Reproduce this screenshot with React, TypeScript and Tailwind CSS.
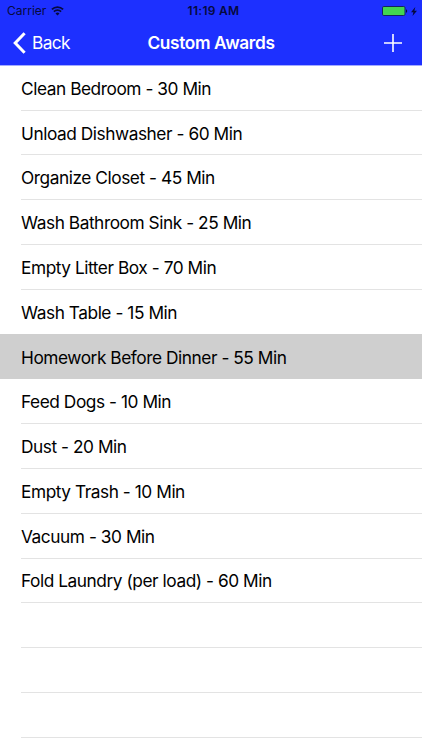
interface Award {
  id: number;
  name: string;
  minutes: number;
}

const awards: Award[] = [
  { id: 1, name: "Clean Bedroom", minutes: 30 },
  { id: 2, name: "Unload Dishwasher", minutes: 60 },
  { id: 3, name: "Organize Closet", minutes: 45 },
  { id: 4, name: "Wash Bathroom Sink", minutes: 25 },
  { id: 5, name: "Empty Litter Box", minutes: 70 },
  { id: 6, name: "Wash Table", minutes: 15 },
  { id: 7, name: "Homework Before Dinner", minutes: 55 },
  { id: 8, name: "Feed Dogs", minutes: 10 },
  { id: 9, name: "Dust", minutes: 20 },
  { id: 10, name: "Empty Trash", minutes: 10 },
  { id: 11, name: "Vacuum", minutes: 30 },
  { id: 12, name: "Fold Laundry (per load)", minutes: 60 },
];

const emptyRows = [1, 2, 3, 4];
const selectedId = 7;

function StatusBar() {
  return (
    <div className="grid grid-cols-3 items-center h-[21px] pt-[1px] pl-[7px] pr-[5px] text-[#060a40]">
      <div className="flex items-center gap-[5px] text-[12px] leading-none">
        <span>Carrier</span>
        <svg width="13" height="10" viewBox="0 0 13 10" fill="none" stroke="currentColor">
          <path d="M0.9 3.4a8 8 0 0 1 11.2 0" strokeWidth="1.8" />
          <path d="M2.9 5.7a5.1 5.1 0 0 1 7.2 0" strokeWidth="1.7" />
          <path d="M6.5 9.6L4.5 7.5a2.9 2.9 0 0 1 4 0z" fill="currentColor" stroke="none" />
        </svg>
      </div>
      <span className="pl-[3px] text-center text-[12px] leading-none font-semibold tracking-[0.3px]">
        11:19 AM
      </span>
      <div className="flex items-center justify-end gap-[3px]">
        <svg width="26" height="10" viewBox="0 0 26 10">
          <rect x="0.5" y="0.5" width="22.5" height="9" rx="1.3" fill="#43d551" stroke="#14235f" />
          <path d="M24 3.2c1.6 0.4 1.6 3.2 0 3.6z" fill="#060a40" />
        </svg>
        <svg width="6" height="9" viewBox="0 0 6 9" fill="currentColor">
          <path d="M4.3 0L0 5.2h2.4L1.5 9L6 3.7H3.4z" />
        </svg>
      </div>
    </div>
  );
}

function NavBar() {
  return (
    <div className="grid grid-cols-[1fr_auto_1fr] items-center h-[44px] pl-[13px] pr-[20px] text-white">
      <button className="flex items-center gap-[6px] text-[17.3px] tracking-[-0.6px]">
        <svg width="13" height="22" viewBox="0 0 13 22" fill="none" stroke="currentColor" strokeWidth="3">
          <path d="M11.6 1.2L2.2 11l9.4 9.8" />
        </svg>
        <span>Back</span>
      </button>
      <h1 className="pl-[7px] text-[17.3px] font-semibold tracking-[-0.36px]">Custom Awards</h1>
      <button className="justify-self-end">
        <svg width="18" height="18" viewBox="0 0 18 18" stroke="currentColor" strokeWidth="1.6">
          <path d="M9 0v18M0 9h18" />
        </svg>
      </button>
    </div>
  );
}

function AwardRow({ award }: { award: Award }) {
  const selected = award.id === selectedId;
  const hideLine = selected || award.id === selectedId - 1;
  return (
    <li
      className={
        selected ? "h-[45.8px] -mt-px pt-px pl-[21px] bg-[#cfcfcf]" : "h-[44.8px] pl-[21px]"
      }
    >
      <p
        className={
          hideLine
            ? "h-full flex items-center pt-[2px] border-b border-transparent"
            : "h-full flex items-center pt-[2px] border-b border-[#e3e3e3]"
        }
      >
        {award.name} - {award.minutes} Min
      </p>
    </li>
  );
}

export default function App() {
  return (
    <div className="h-[750px] overflow-hidden bg-white text-black font-['Inter',sans-serif]">
      <header className="h-[65.8px] border-b border-[#a3abff] bg-[#1d30ff]">
        <StatusBar />
        <NavBar />
      </header>
      <ul className="text-[17.3px] tracking-[-0.45px] whitespace-pre">
        {awards.map((award) => (
          <AwardRow key={award.id} award={award} />
        ))}
        {emptyRows.map((row) => (
          <li key={row} className="h-[44.8px] pl-[21px]">
            <div className="h-full border-b border-[#e3e3e3]"></div>
          </li>
        ))}
      </ul>
    </div>
  );
}
